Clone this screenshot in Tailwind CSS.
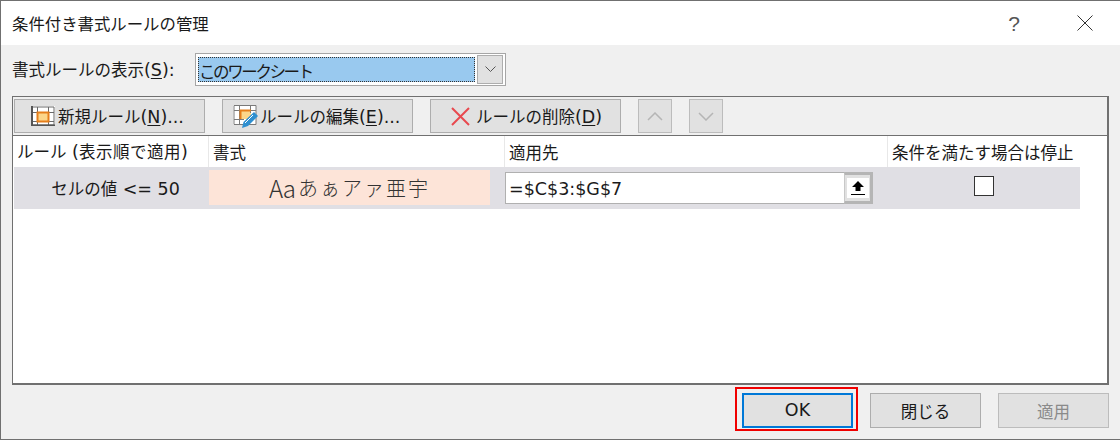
<!DOCTYPE html>
<html lang="ja"><head><meta charset="utf-8"><script src="https://cdn.jsdelivr.net/npm/@tailwindcss/browser@4"></script></head>
<body class="m-0 bg-[#f0f0f0]">
<div class="relative w-[1120px] h-[440px] overflow-hidden flex flex-col bg-[#f0f0f0] border-t border-b border-l border-[#707070] text-[#1a1a1a] text-[16.5px] leading-none font-['Noto_Sans_CJK_JP',sans-serif] font-normal">
  <div class="h-[44px] shrink-0 bg-white flex items-center pl-[11px] pr-[27px] justify-between">
    <span class="text-[16.4px]">条件付き書式ルールの管理</span>
    <div class="flex items-center gap-[57px]">
      <span class="text-[21px] text-[#555] font-['Liberation_Sans'] -ml-[1px]">?</span>
      <svg width="16" height="16" viewBox="0 0 16 16" fill="none" stroke="#333" stroke-width="1"><path d="M.5.5l15 15M15.500.5l-15 15"/></svg>
    </div>
  </div>
  <div class="flex items-center h-[46px] pt-[5px] pl-[11px] shrink-0">
    <span class="w-[183px]">書式ルールの表示<span class="text-[17.5px] font-['DejaVu_Sans']">(<u class="underline-offset-2">S</u>):</span></span>
    <div class="w-[311px] h-[33px] -mt-[3px] border border-[#a6a6a6] bg-white flex items-center pl-[2px] pr-[2px] gap-[2px]">
      <div class="w-[279px] h-[25px] bg-[#99c9ef] border border-dotted border-[#333] flex items-center pl-0 pt-[5px] tracking-[-2.4px]">このワークシート</div>
      <div class="w-[26px] h-[29px] bg-[#e1e1e1] border border-[#adadad] flex items-center justify-center"><svg width="11" height="6" viewBox="0 0 11 6" fill="none" stroke="#555"><path d="M.5.5l5 5 5-5"/></svg></div>
    </div>
  </div>
  <div class="ml-[11px] mr-[11px] mt-[5px] h-[289px] border-2 border-[#707070] border-t border-l flex flex-col bg-white shrink-0">
    <div class="h-[39px] bg-[#f0f0f0] border-b border-[#707070] flex items-start pt-[2px] pl-[1px] shrink-0">
      <div class="w-[191px] h-[34px] bg-[#e1e1e1] border border-[#adadad] flex items-center pl-[16px] gap-[3px] pt-[2px]">
        <svg width="24" height="20" viewBox="0 0 24 20" class="shrink-0 -mt-[2px]"><rect width="24" height="20" fill="#fff"/><path d="M6 6h12v9H6z" fill="#fcd68a"/><path d="M1 1h22v18H1zM1 6.500h22M1 15.500h22M6.500 1v18M17.500 1v18" fill="none" stroke="#6a6a6a" stroke-width="1"/><path d="M1 0v20M0 19.500h24" stroke="#555" stroke-width="2"/><path d="M6.500 6.500h11v9h-11z" fill="none" stroke="#e67e1a" stroke-width="2"/></svg>
        <span>新規ルール<span class="text-[17.5px] font-['DejaVu_Sans']">(<u class="underline-offset-2">N</u>)...</span></span>
      </div>
      <div class="ml-[17px] w-[191px] h-[34px] bg-[#e1e1e1] border border-[#adadad] flex items-center pl-[10px] gap-[1px] pt-[2px]">
        <svg width="26" height="24" viewBox="0 0 26 24" class="shrink-0 -mt-[2px]"><rect y="1" width="23" height="20" fill="#fff"/><path d="M7 6h11v9H7z" fill="#fcd68a"/><path d="M1 1.500h22v19H1zM1 6.500h22M1 15.500h10M6.500 1v20M17.500 1v8" fill="none" stroke="#7a7a7a"/><path d="M7.500 15V6.500H18" fill="none" stroke="#e67e1a" stroke-width="2"/><path d="M9 24l1.500-6L21 8l4 4-10 10z" fill="#2e8fd0"/><path d="M12 19l8-8" stroke="#fff"/></svg>
        <span>ルールの編集<span class="text-[17.5px] font-['DejaVu_Sans']">(<u class="underline-offset-2">E</u>)...</span></span>
      </div>
      <div class="ml-[17px] w-[191px] h-[34px] bg-[#e1e1e1] border border-[#adadad] flex items-center pl-[20px] gap-[6px] pt-[2px]">
        <svg width="19" height="19" viewBox="0 0 19 19" fill="none" stroke="#e8494f" stroke-width="2" class="-mt-[2px]"><path d="M1 1l17 17M18 1L1 18"/></svg>
        <span>ルールの削除<span class="text-[17.5px] font-['DejaVu_Sans']">(<u class="underline-offset-2">D</u>)</span></span>
      </div>
      <div class="ml-[17px] w-[34px] h-[34px] bg-[#e1e1e1] border border-[#bcbcbc] flex items-center justify-center"><svg width="16" height="9" viewBox="0 0 16 9" fill="none" stroke="#b5b5b5" stroke-width="1.500"><path d="M1 8l7-7 7 7"/></svg></div>
      <div class="ml-[17px] w-[34px] h-[34px] bg-[#e1e1e1] border border-[#bcbcbc] flex items-center justify-center"><svg width="16" height="9" viewBox="0 0 16 9" fill="none" stroke="#b5b5b5" stroke-width="1.500"><path d="M1 1l7 7 7-7"/></svg></div>
    </div>
    <div class="flex h-[31px] ml-[1px] w-[1066px] shrink-0 items-center">
      <div class="w-[195px] h-full border-r border-[#e8e8e8] flex items-center pl-[3px] pt-[2px] whitespace-pre"><span>ルール<span class="text-[17.5px] font-['DejaVu_Sans']"> (</span><span class="tracking-[0.5px]">表示順で適用</span><span class="text-[17.5px] font-['DejaVu_Sans']">)</span></span></div>
      <div class="w-[296px] h-full border-r border-[#e8e8e8] flex items-center pl-[4px] pt-[2px]">書式</div>
      <div class="w-[383px] h-full border-r border-[#e8e8e8] flex items-center pl-[4px] pt-[2px]">適用先</div>
      <div class="flex-1 h-full flex items-center pl-[4px] pt-[2px]">条件を満たす場合は停止</div>
    </div>
    <div class="flex h-[42px] ml-[1px] w-[1066px] bg-[#e0dfe4] items-center shrink-0">
      <div class="w-[195px] text-center pl-[8px] pt-[3px] whitespace-nowrap"><span>セルの値<span class="text-[17.5px] font-['DejaVu_Sans']"> &lt;= 50</span></span></div>
      <div class="w-[281px] h-[35px] -mt-[2px] bg-[#fde4d8] flex items-center justify-center tracking-[2px] text-[20px] text-[#333] pt-[2px] font-light"><span class="text-[24px] tracking-[-1px] mr-[3px]">Aa</span>あぁアァ亜宇</div>
      <div class="ml-[15px] w-[368px] h-[32px] flex bg-white border border-[#b0b0b0] border-r-0">
        <div class="flex-1 flex items-center pl-[3px] pt-[3px] text-[17.5px] font-['DejaVu_Sans']">=$C$3:$G$7</div>
        <div class="w-[29px] h-[32px] -mt-[1px] shrink-0 border-3 border-[#b5b5b5] border-l border-l-[#c8c8c8] bg-[#e1e1e1] flex items-center justify-center">
          <div class="w-[22px] h-[20px] bg-white flex items-center justify-center"><svg width="14" height="16" viewBox="0 0 14 16"><path d="M7 1l6 6H9.500v4h-5V7H1z"/><path d="M0 14.500h14" stroke="#000" stroke-width="1"/></svg></div>
        </div>
      </div>
      <div class="ml-[101px] w-[20px] h-[20px] bg-white border border-[#333] -mt-[4px]"></div>
    </div>
  </div>
  <div class="flex justify-end gap-[17px] mt-[8px] pr-[11px]">
    <div class="w-[111px] h-[35px] bg-[#e1e1e1] border-2 border-[#0078d7] flex items-center justify-center text-[17.5px] font-['DejaVu_Sans'] pt-[1px]">OK</div>
    <div class="w-[111px] h-[35px] bg-[#e1e1e1] border border-[#adadad] flex items-center justify-center pt-[1px]">閉じる</div>
    <div class="w-[111px] h-[35px] bg-[#e1e1e1] border border-[#bcbcbc] flex items-center justify-center text-[#8a8a8a] pt-[1px]">適用</div>
  </div>
  <div class="absolute left-[734px] top-[386px] w-[123px] h-[44px] border-2 border-[#f00000]"></div>
</div>
</body></html>
